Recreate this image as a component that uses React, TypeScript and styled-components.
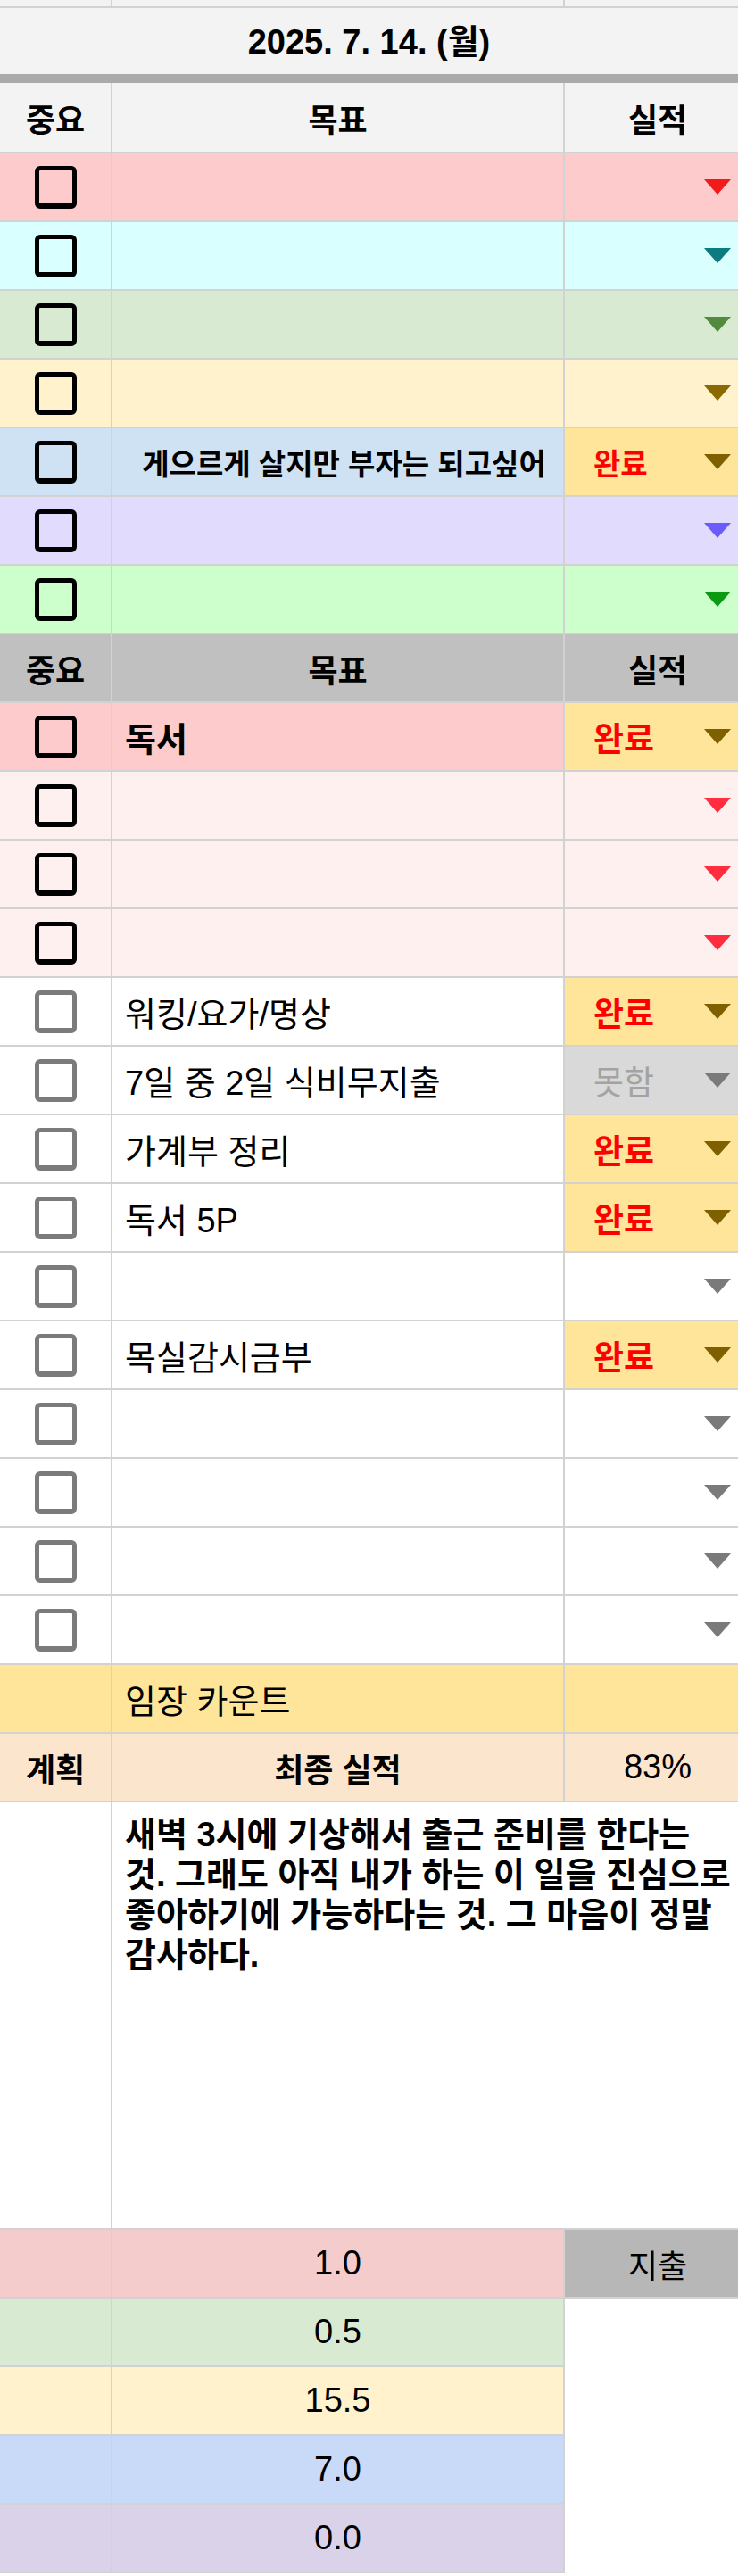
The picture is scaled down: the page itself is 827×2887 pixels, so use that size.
import styled, { createGlobalStyle } from "styled-components";

const LINE = "#d2d2d2";

const GlobalStyle = createGlobalStyle`
  html, body {
    margin: 0;
    padding: 0;
    background: #fff;
  }
  body {
    font-family: "Liberation Sans", "Noto Sans CJK KR", sans-serif;
    color: #000;
  }
`;

const Sheet = styled.div`
  width: 827px;
  display: flex;
  flex-direction: column;
  overflow: hidden;
`;

const Row = styled.div<{ $h: number }>`
  display: grid;
  grid-template-columns: 126px 507px 194px;
  height: ${({ $h }) => $h}px;
`;

const Cell = styled.div<{ $bg?: string; $edge?: boolean; $plain?: boolean; $span?: number }>`
  grid-column: span ${({ $span }) => $span ?? 1};
  box-sizing: border-box;
  min-width: 0;
  display: flex;
  align-items: center;
  background: ${({ $bg }) => $bg ?? "#fff"};
  border-bottom: ${({ $plain }) => ($plain ? "none" : `2px solid ${LINE}`)};
  border-right: ${({ $edge }) => ($edge ? `2px solid ${LINE}` : "none")};
`;

const CenterCell = styled(Cell)<{ $size?: number; $bold?: boolean; $shift?: number }>`
  justify-content: center;
  padding-left: ${({ $shift }) => $shift ?? 0}px;
  font-size: ${({ $size }) => $size ?? 36}px;
  font-weight: ${({ $bold }) => ($bold ? 700 : 400)};
`;

const DateCell = styled(Cell)`
  grid-column: span 3;
  justify-content: center;
  padding-bottom: 6px;
  border-bottom: 10px solid #aaaaaa;
  font-size: 38px;
  font-weight: 700;
`;

const GoalCell = styled(Cell)<{ $top?: boolean; $bold?: boolean }>`
  padding-left: 14px;
  justify-content: ${({ $top }) => ($top ? "center" : "flex-start")};
  font-size: ${({ $top }) => ($top ? 33 : 38)}px;
  font-weight: ${({ $top, $bold }) => ($top || $bold ? 700 : 400)};
  white-space: nowrap;
`;

const StatusCell = styled(Cell)`
  padding: 0 8px 0 32px;
`;

const StatusLabel = styled.span<{ $fail?: boolean; $small?: boolean }>`
  font-size: ${({ $small }) => ($small ? 33 : 37)}px;
  font-weight: ${({ $fail }) => ($fail ? 400 : 700)};
  color: ${({ $fail }) => ($fail ? "#a3a3a3" : "#ff0000")};
`;

const Arrow = styled.span<{ $color: string }>`
  margin-left: auto;
  width: 0;
  height: 0;
  border-left: 15px solid transparent;
  border-right: 15px solid transparent;
  border-top: 17px solid ${({ $color }) => $color};
`;

const Box = styled.span<{ $light?: boolean }>`
  box-sizing: border-box;
  width: 47px;
  height: 48px;
  border: 5px solid ${({ $light }) => ($light ? "#7b7b7b" : "#000")};
  border-bottom-width: 6px;
  border-radius: 6px;
`;

const NoteCell = styled(Cell)`
  grid-column: span 2;
  align-items: flex-start;
  padding: 14px 4px 0 14px;
  font-size: 38px;
  font-weight: 700;
  line-height: 45px;
  white-space: nowrap;
`;

type Status = "done" | "fail";

interface Goal {
  text?: string;
  bg: string;
  arrow: string;
  status?: Status;
  light?: boolean;
  bold?: boolean;
}

const topGoals: Goal[] = [
  { bg: "#fdcbcb", arrow: "#f21a1a" },
  { bg: "#d9ffff", arrow: "#0b7b80" },
  { bg: "#d9ead3", arrow: "#538a3d" },
  { bg: "#fff2cc", arrow: "#8a6a00" },
  { bg: "#cfe2f3", arrow: "#7f6000", text: "게으르게 살지만 부자는 되고싶어", status: "done" },
  { bg: "#e1dcfd", arrow: "#6b5bfa" },
  { bg: "#ccffcc", arrow: "#0a9a12" },
];

const dailyGoals: Goal[] = [
  { bg: "#fdcbcb", arrow: "#7f6000", text: "독서", status: "done", bold: true },
  { bg: "#fff0f0", arrow: "#ff2d3d" },
  { bg: "#fff0f0", arrow: "#ff2d3d" },
  { bg: "#fff0f0", arrow: "#ff2d3d" },
  { bg: "#fff", arrow: "#7f6000", text: "워킹/요가/명상", status: "done", light: true },
  { bg: "#fff", arrow: "#7a7a7a", text: "7일 중 2일 식비무지출", status: "fail", light: true },
  { bg: "#fff", arrow: "#7f6000", text: "가계부 정리", status: "done", light: true },
  { bg: "#fff", arrow: "#7f6000", text: "독서 5P", status: "done", light: true },
  { bg: "#fff", arrow: "#7a7a7a", light: true },
  { bg: "#fff", arrow: "#7f6000", text: "목실감시금부", status: "done", light: true },
  { bg: "#fff", arrow: "#7a7a7a", light: true },
  { bg: "#fff", arrow: "#7a7a7a", light: true },
  { bg: "#fff", arrow: "#7a7a7a", light: true },
  { bg: "#fff", arrow: "#7a7a7a", light: true },
];

const tallies = [
  { value: "1.0", bg: "#f4cccc" },
  { value: "0.5", bg: "#d9ead3" },
  { value: "15.5", bg: "#fff2cc" },
  { value: "7.0", bg: "#c9daf8" },
  { value: "0.0", bg: "#d9d2e9" },
];

const statusBg = (goal: Goal) =>
  goal.status === "done" ? "#ffe599" : goal.status === "fail" ? "#d9d9d9" : goal.bg;

const Header = ({ bg, h }: { bg: string; h: number }) => (
  <Row $h={h}>
    <CenterCell $bg={bg} $edge $bold>중요</CenterCell>
    <CenterCell $bg={bg} $edge $bold>목표</CenterCell>
    <CenterCell $bg={bg} $bold $shift={14}>실적</CenterCell>
  </Row>
);

const GoalRow = ({ goal, top }: { goal: Goal; top?: boolean }) => (
  <Row $h={77}>
    <CenterCell $bg={goal.bg} $edge>
      <Box $light={goal.light} />
    </CenterCell>
    <GoalCell $bg={goal.bg} $edge $top={top} $bold={goal.bold}>
      {goal.text}
    </GoalCell>
    <StatusCell $bg={statusBg(goal)}>
      {goal.status && (
        <StatusLabel $fail={goal.status === "fail"} $small={top}>
          {goal.status === "done" ? "완료" : "못함"}
        </StatusLabel>
      )}
      <Arrow $color={goal.arrow} />
    </StatusCell>
  </Row>
);

export default function App() {
  return (
    <>
      <GlobalStyle />
      <Sheet>
        <Row $h={9}>
          <Cell $bg="#f3f3f3" $edge />
          <Cell $bg="#f3f3f3" $edge />
          <Cell $bg="#f3f3f3" />
        </Row>
        <Row $h={84}>
          <DateCell $bg="#f3f3f3">2025. 7. 14. (월)</DateCell>
        </Row>
        <Header bg="#f3f3f3" h={79} />
        {topGoals.map((g, i) => (
          <GoalRow key={`t${i}`} goal={g} top />
        ))}
        <Header bg="#c0c0c0" h={77} />
        {dailyGoals.map((g, i) => (
          <GoalRow key={`d${i}`} goal={g} />
        ))}
        <Row $h={77}>
          <Cell $bg="#ffe599" $edge />
          <GoalCell $bg="#ffe599" $edge>임장 카운트</GoalCell>
          <Cell $bg="#ffe599" />
        </Row>
        <Row $h={77}>
          <CenterCell $bg="#fce5cd" $edge $bold>계획</CenterCell>
          <CenterCell $bg="#fce5cd" $edge $bold>최종 실적</CenterCell>
          <CenterCell $bg="#fce5cd" $size={38} $shift={14}>83%</CenterCell>
        </Row>
        <Row $h={479}>
          <Cell $edge />
          <NoteCell>
            새벽 3시에 기상해서 출근 준비를 한다는
            <br />
            것. 그래도 아직 내가 하는 이 일을 진심으로
            <br />
            좋아하기에 가능하다는 것. 그 마음이 정말
            <br />
            감사하다.
          </NoteCell>
        </Row>
        {tallies.map((t, i) => (
          <Row $h={77} key={t.value + i}>
            <Cell $bg={t.bg} $edge />
            <CenterCell $bg={t.bg} $edge $size={38}>{t.value}</CenterCell>
            {i === 0 ? (
              <CenterCell $bg="#b7b7b7" $shift={14}>지출</CenterCell>
            ) : (
              <Cell $plain />
            )}
          </Row>
        ))}
      </Sheet>
    </>
  );
}
